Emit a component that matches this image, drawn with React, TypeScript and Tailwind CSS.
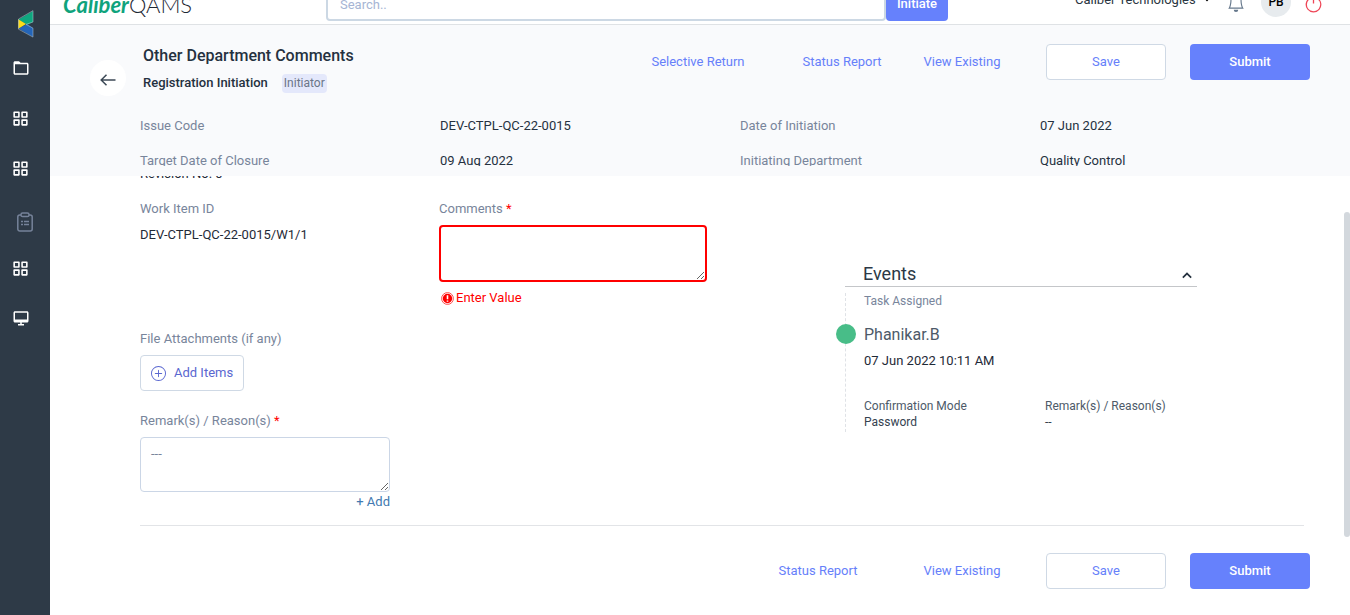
import React from "react";
import { BiFolder, BiGridAlt, BiDesktop, BiChevronUp } from "react-icons/bi";
import { BsBell, BsPower, BsPlusCircle, BsCaretDownFill } from "react-icons/bs";

function BrandMark() {
  return (
    <svg width="16" height="28" viewBox="0 0 16 28" aria-hidden="true">
      <path d="M0.5 9.5 15 1v11l-6 3z" fill="#0fa77f" />
      <path d="M0.5 18.5 9 14l6 4v9z" fill="#2465b8" />
      <path d="M0.3 9.2 8 14 0.3 18.8z" fill="#fbdc1c" />
      <path d="M15 0.6V12l-7 2.4 7 3.8v8.9L0.5 19.200V9z" fill="none" stroke="#b9cbd6" strokeWidth="0.5" />
    </svg>
  );
}

function ClipboardList() {
  return (
    <svg width="16" height="20" viewBox="0 0 16 20" fill="none" stroke="#76839a" strokeWidth="1.5" aria-hidden="true">
      <path d="M4 3H2.700A2 2 0 0 0 .8 5v12a2 2 0 0 0 2 2h10.400a2 2 0 0 0 2-2V5a2 2 0 0 0-2-2H12" />
      <rect x="4" y="1" width="8" height="3.600" rx="1.600" />
      <path d="M4 9.500h2M4 12.500h2M7 9.500h5M7 12.500h5" />
    </svg>
  );
}

function BackArrow() {
  return (
    <svg width="16" height="12" viewBox="0 0 16 12" fill="none" stroke="currentColor" strokeWidth="1.5" aria-hidden="true">
      <path d="M15.500 6H1.200M6.500 0.700 1.200 6l5.300 5.300" />
    </svg>
  );
}

function ErrorIcon() {
  return (
    <svg width="13" height="13" viewBox="0 0 13 13" aria-hidden="true">
      <circle cx="6.500" cy="6.500" r="5.900" fill="none" stroke="#ff3b3b" strokeWidth="0.900" />
      <circle cx="6.500" cy="6.500" r="4.700" fill="#ff0000" />
      <path d="M6.500 3.200v4M6.500 8.400v1.400" stroke="#fff" strokeWidth="1.600" />
    </svg>
  );
}

const navItems = [
  { label: "Documents", icon: <BiFolder size={18} /> },
  { label: "Modules", icon: <BiGridAlt size={19} /> },
  { label: "Records", icon: <BiGridAlt size={19} /> },
  { label: "Tasks", icon: <ClipboardList />, shifted: true },
  { label: "Reports", icon: <BiGridAlt size={19} /> },
  { label: "Monitor", icon: <BiDesktop size={18} /> },
];

const details = [
  ["Issue Code", "DEV-CTPL-QC-22-0015"],
  ["Date of Initiation", "07 Jun 2022"],
  ["Target Date of Closure", "09 Aug 2022"],
  ["Initiating Department", "Quality Control"],
];

function LinkButton({ children }: { children: React.ReactNode }) {
  return (
    <button type="button" className="h-9 w-30 text-[#6680fa]">
      {children}
    </button>
  );
}

function FormButtons() {
  return (
    <>
      <button type="button" className="h-9 w-30 rounded border border-[#cfd9e5] bg-white text-[#6680fa]">
        Save
      </button>
      <button type="submit" className="h-9 w-30 rounded bg-[#6681fc] font-medium text-white">
        Submit
      </button>
    </>
  );
}

function Sidebar() {
  return (
    <nav className="w-[50px] shrink-0 bg-[#2e3a47] text-white">
      <div className="flex h-[43px] items-center pt-1 pl-[18px]">
        <BrandMark />
      </div>
      {navItems.map((item) => (
        <a
          key={item.label}
          href="#"
          aria-label={item.label}
          className={
            item.shifted ? "flex h-[50px] items-center pt-2 pl-[17px]" : "flex h-[50px] w-[41px] items-center justify-center"
          }
        >
          {item.icon}
        </a>
      ))}
    </nav>
  );
}

function TopBar() {
  return (
    <header className="flex h-6 shrink-0 flex-col justify-end overflow-hidden bg-white">
      <div className="flex h-[42px] shrink-0 items-center pr-[26px] pl-[13px]">
        <div className="flex w-[263px] items-baseline pt-1 font-[Lato] text-[22px] leading-7">
          <span className="font-bold text-[#0fa37c] italic">Caliber</span>
          <span className="font-light text-[#1d2733]">QAMS</span>
        </div>
        <form className="flex items-center">
          <input
            type="text"
            aria-label="Search"
            placeholder="Search.."
            className="h-9 w-[560px] rounded border-2 border-[#ccd8e4] px-3 pt-0.5 placeholder:text-[#a6b5d4]"
          />
          <button type="button" className="h-9 w-[62px] rounded bg-[#6681fc] pt-0.5 font-medium text-white">
            Initiate
          </button>
        </form>
        <div className="ml-auto flex items-center">
          <div className="flex items-center gap-2 pb-1.5">
            <select aria-label="Company" className="appearance-none bg-transparent text-[#2b3642]">
              <option>Caliber Technologies</option>
            </select>
            <BsCaretDownFill size={6} />
          </div>
          <button type="button" aria-label="Notifications" className="ml-[17px] text-[#66788c]">
            <BsBell size={18} />
          </button>
          <span className="mb-0.5 ml-4 flex size-[30px] items-center justify-center rounded-full bg-[#e7ebee] text-[12px] font-medium text-black">
            PB
          </span>
          <button type="button" aria-label="Sign out" className="ml-3 text-[#ee4657]">
            <BsPower size={21} />
          </button>
        </div>
      </div>
    </header>
  );
}

function PageHeader() {
  return (
    <section className="shrink-0 border-t border-[#dfe2e5] bg-[#f9fafc] pb-2.5">
      <div className="flex h-[83px] justify-between pt-[19px] pr-10 pl-10">
        <div className="flex gap-[17px]">
          <button
            type="button"
            aria-label="Back"
            className="mt-4 flex size-9 items-center justify-center rounded-full bg-white pt-1 text-[#3c4855]"
          >
            <BackArrow />
          </button>
          <div>
            <h1 className="text-[16px] leading-6 font-medium text-[#25313f]">Other Department Comments</h1>
            <div className="mt-[5px] flex items-center gap-3.5">
              <h2 className="leading-5 font-medium text-[#25313f]">Registration Initiation</h2>
              <span className="rounded bg-[#e4e8fb] px-0.5 text-[12px] leading-[19px] text-[#6b7688]">Initiator</span>
            </div>
          </div>
        </div>
        <div className="flex gap-6">
          <LinkButton>Selective Return</LinkButton>
          <div className="flex">
            <LinkButton>Status Report</LinkButton>
            <LinkButton>View Existing</LinkButton>
          </div>
          <FormButtons />
        </div>
      </div>
      <dl className="grid h-[58px] grid-cols-4 content-start gap-y-[15px] overflow-hidden pt-2 pr-2.5 pl-[90px]">
        {details.map(([name, value]) => (
          <React.Fragment key={name}>
            <dt className="text-[#78859b]">{name}</dt>
            <dd className="text-[#25313f]">{value}</dd>
          </React.Fragment>
        ))}
      </dl>
    </section>
  );
}

function Events() {
  return (
    <aside className="w-[352px]">
      <div className="flex h-[26px] items-center justify-between border-b border-[#c4c6c9] pl-[18px]">
        <h3 className="text-[18px] text-[#2b3846]">Events</h3>
        <button type="button" aria-label="Collapse events" className="mt-1 text-[#25313f]">
          <BiChevronUp size={20} />
        </button>
      </div>
      <div className="relative mt-1.5 border-l border-dashed border-[#dfe2e6] pb-0.5 pl-[18px] text-[12px] leading-4 text-[#4d5a69]">
        <span className="absolute top-[31px] -left-2.5 size-5 rounded-full bg-[#48bd88]" />
        <p className="text-[#78859b]">Task Assigned</p>
        <p className="mt-4 text-[16px] leading-5 text-[#4d5a69]">Phanikar.B</p>
        <p className="mt-1.5 text-[13px] leading-5 text-[#1f2a37]">07 Jun 2022 10:11 AM</p>
        <dl className="mt-[27px] grid grid-cols-[181px_1fr]">
          <div>
            <dt>Confirmation Mode</dt>
            <dd className="text-[#354250]">Password</dd>
          </div>
          <div>
            <dt>Remark(s) / Reason(s)</dt>
            <dd className="text-[#354250]">--</dd>
          </div>
        </dl>
      </div>
    </aside>
  );
}

export default function App() {
  return (
    <div className="flex h-screen overflow-hidden bg-white font-[Roboto,sans-serif] text-[13px] leading-5">
      <Sidebar />
      <div className="flex min-w-0 flex-1 flex-col">
        <TopBar />
        <PageHeader />
        <main className="relative min-h-0 flex-1 overflow-hidden">
          <form className="pr-10 pl-[90px]">
            <p className="-mt-3 text-[#1f2a37]">Revision No. 0</p>
            <div className="mr-1.5 grid grid-cols-[299fr_406fr_459fr] border-b border-[#e2e4e7] pt-[15px] pb-[13px]">
              <div>
                <p className="text-[#78859b]">Work Item ID</p>
                <p className="mt-1.5 text-[#1f2a37]">DEV-CTPL-QC-22-0015/W1/1</p>
                <p className="mt-21 text-[#78859b]">File Attachments (if any)</p>
                <button
                  type="button"
                  className="mt-1.5 flex h-9 w-26 items-center gap-2 rounded border border-[#cfd9e5] pl-2.5 text-[#5a67d0]"
                >
                  <BsPlusCircle size={15} />
                  Add Items
                </button>
                <label htmlFor="remarks" className="mt-5 block text-[#78859b]">
                  Remark(s) / Reason(s) <span className="text-[#ff0000]">*</span>
                </label>
                <div className="mt-1.5 w-[250px]">
                  <textarea
                    id="remarks"
                    placeholder="---"
                    className="block h-[55px] w-full rounded border border-[#cbd6e6] px-2.5 py-1.5 placeholder:text-[#78859b]"
                  />
                  <button type="button" className="ml-auto block text-[#4179b0]">
                    + Add
                  </button>
                </div>
              </div>
              <div>
                <label htmlFor="comments" className="block text-[#78859b]">
                  Comments <span className="text-[#ff0000]">*</span>
                </label>
                <textarea
                  id="comments"
                  className="mt-1.5 block h-[57px] w-[268px] rounded border-2 border-[#ff0000] px-2.5 py-1.5"
                />
                <p className="mt-1.5 flex items-center gap-0.5 pl-0.5 text-[#ff0000]">
                  <ErrorIcon />
                  Enter Value
                </p>
              </div>
              <div className="pt-[62px]">
                <Events />
              </div>
            </div>
            <div className="flex justify-end gap-6 pt-[27px]">
              <LinkButton>Status Report</LinkButton>
              <LinkButton>View Existing</LinkButton>
              <FormButtons />
            </div>
          </form>
          <div className="absolute top-9 right-0 h-[325px] w-1.5 rounded-full bg-[#d3d8dd]" />
        </main>
      </div>
    </div>
  );
}
